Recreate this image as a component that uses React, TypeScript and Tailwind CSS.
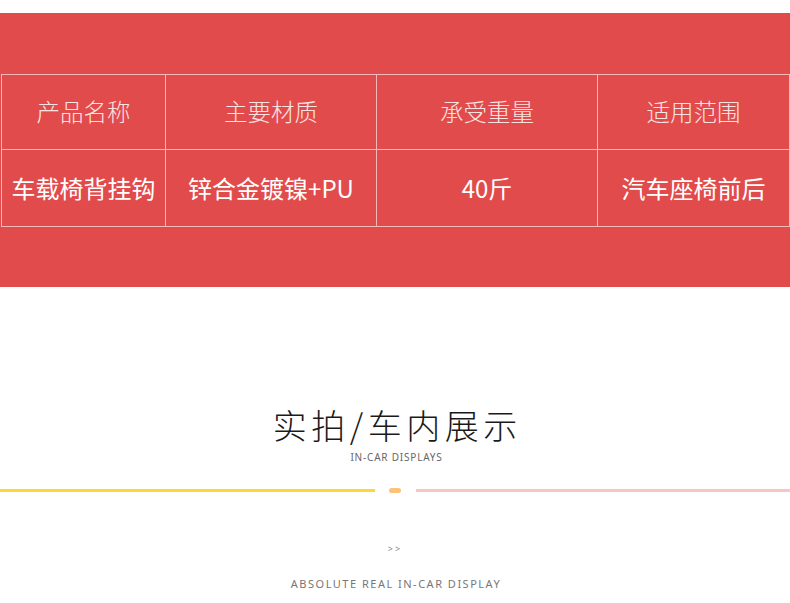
import React from "react";

const cjk = { fontFamily: '"Noto Sans CJK SC", "Noto Sans", sans-serif' };
const latin = { fontFamily: '"Noto Sans", "Noto Sans CJK SC", sans-serif' };

const headers = ["产品名称", "主要材质", "承受重量", "适用范围"];
const values = ["车载椅背挂钩", "锌合金镀镍+PU", "40斤", "汽车座椅前后"];
const widths = ["w-[164px]", "w-[211px]", "w-[221px]", "w-[192px]"];

export default function App() {
  return (
    <div className="w-[790px] h-[603px] bg-white overflow-hidden" style={cjk}>
      <div className="h-[13px]" />
      <div className="h-[274px] bg-[#e24b4b] pt-[61px] pl-[1px]">
        <div className="w-[789px] border border-[#f4b8b8] flex flex-col">
          <div className="flex h-[75px] border-b border-[#f4b8b8]">
            {headers.map((h, i) => (
              <div
                key={h}
                className={`${widths[i]} ${i < 3 ? "border-r border-[#f4b8b8]" : "flex-1"} flex items-center justify-center text-[23.5px] font-light text-[#fbe3e3]`}
              >
                {h}
              </div>
            ))}
          </div>
          <div className="flex h-[76px]">
            {values.map((v, i) => (
              <div
                key={v}
                className={`${widths[i]} ${i < 3 ? "border-r border-[#f4b8b8]" : "flex-1"} flex items-center justify-center text-[24px] font-normal text-white`}
              >
                {v}
              </div>
            ))}
          </div>
        </div>
      </div>
      <div className="h-[118px]" />
      <div className="flex flex-col items-center">
        <div className="text-[34px] leading-[40px] font-light text-[#1a1a1a] tracking-[4.5px] pl-[4.5px]">
          实拍/车内展示
        </div>
        <div
          className="mt-[6px] text-[10px] leading-[12px] text-[#666] tracking-[0.8px] pl-[3px]"
          style={latin}
        >
          IN-CAR DISPLAYS
        </div>
      </div>
      <div className="mt-[25px] flex items-center h-[5px]">
        <div className="w-[375px] h-[3px] bg-[#fcd835]" />
        <div className="w-[14px]" />
        <div className="w-[12px] h-[5px] rounded-full bg-[#fdc27a]" />
        <div className="w-[15px]" />
        <div className="flex-1 h-[3px] bg-[#f9c5c5]" />
      </div>
      <div className="mt-[51px] flex justify-center text-[9px] leading-[10px] text-[#888] tracking-[2px]" style={latin}>
        &gt;&gt;
      </div>
      <div className="mt-[23px] flex justify-center text-[11px] leading-[14px] text-[#777] tracking-[1.5px] pl-[2px]" style={latin}>
        ABSOLUTE REAL IN-CAR DISPLAY
      </div>
    </div>
  );
}
